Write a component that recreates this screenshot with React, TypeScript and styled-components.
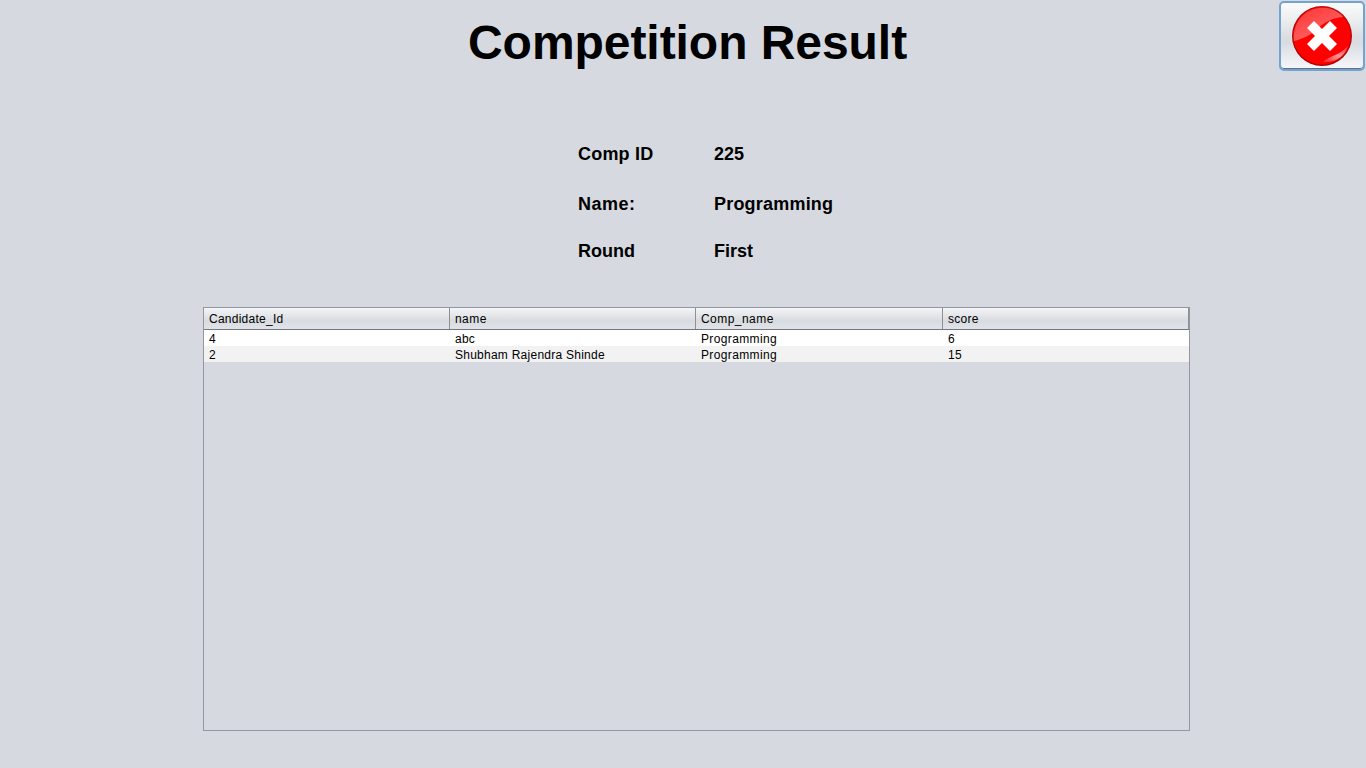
import React from "react";
import styled, { createGlobalStyle } from "styled-components";

const GlobalStyle = createGlobalStyle`
  body { margin: 0; background: #d6d9df; }
  * { box-sizing: border-box; }
`;

const Page = styled.main`
  display: flex;
  flex-direction: column;
  width: 1366px;
  height: 768px;
  overflow: hidden;
  background: #d6d9df;
  color: #000;
  font-family: "Liberation Sans", Arial, sans-serif;
`;

const Header = styled.header`
  display: grid;
  grid-template-columns: 1fr auto;
  height: 144px;
  align-items: start;
`;

const Title = styled.h1`
  margin: 15px 0 0 468px;
  font-size: 48px;
  line-height: 56px;
  letter-spacing: -0.05px;
  font-weight: bold;
  white-space: nowrap;
`;

const CloseButton = styled.button`
  display: flex;
  align-items: center;
  justify-content: center;
  width: 86px;
  height: 70px;
  margin: 1px 1px 0 0;
  padding: 0;
  border: 2px solid #73a4d1;
  border-radius: 5px;
  background: linear-gradient(#fbfbfc 0%, #eceef0 25%, #dcdee2 50%, #d8dbe0 60%, #f6f8fb 100%);
  box-shadow: inset 0 -1px 0 #5c6f86;
`;

const Details = styled.dl`
  display: grid;
  grid-template-columns: 136px 200px;
  grid-template-rows: 50px 47px 66px;
  margin: 0 0 0 578px;
  font-size: 18px;
  line-height: 20px;
  font-weight: bold;
`;

const Term = styled.dt<{ $tracking?: number }>`
  letter-spacing: ${(p) => p.$tracking ?? 0}px;
`;

const Value = styled.dd<{ $tracking?: number }>`
  margin: 0;
  letter-spacing: ${(p) => p.$tracking ?? 0}px;
`;

const TablePane = styled.section`
  width: 987px;
  height: 424px;
  margin-left: 203px;
  border: 1px solid #9297a1;
`;

const HeaderRow = styled.div`
  display: grid;
  grid-template-columns: 246px 246px 247px 246px;
  height: 22px;
  border-bottom: 1px solid #73767e;
  background: linear-gradient(#f4f5f7 0%, #e2e4e8 40%, #d8dbdf 60%, #e0e4ea 100%);
`;

const HeaderCell = styled.div<{ $tracking: number }>`
  height: 21px;
  padding-left: 5px;
  border-right: 1px solid #8d9096;
  font-size: 12px;
  line-height: 23px;
  letter-spacing: ${(p) => p.$tracking}px;
`;

const Row = styled.div<{ $alternate: boolean }>`
  display: grid;
  grid-template-columns: 246px 246px 247px 246px;
  height: 16px;
  background: ${(p) => (p.$alternate ? "#f2f2f2" : "#fff")};
`;

const Cell = styled.div<{ $tracking: number }>`
  padding-left: 5px;
  font-size: 12px;
  line-height: 19px;
  letter-spacing: ${(p) => p.$tracking}px;
  white-space: nowrap;
`;

const columns = [
  { label: "Candidate_Id", tracking: 0.25 },
  { label: "name", tracking: 0.45 },
  { label: "Comp_name", tracking: 0.45 },
  { label: "score", tracking: 0.3 },
];

const rows = [
  ["4", "abc", "Programming", "6"],
  ["2", "Shubham Rajendra Shinde", "Programming", "15"],
];

const cellTracking = [0, 0.25, 0.36, 0.3];

function CloseIcon() {
  return (
    <svg width="62" height="62" viewBox="0 0 62 62" aria-hidden="true">
      <defs>
        <linearGradient id="rim" x1="0" y1="0" x2="0" y2="1">
          <stop offset="0" stopColor="#b80f12" />
          <stop offset="1" stopColor="#a80000" />
        </linearGradient>
        <linearGradient id="gloss" x1="0" y1="0" x2="0.7" y2="1">
          <stop offset="0" stopColor="#fff" stopOpacity="0.2" />
          <stop offset="1" stopColor="#fff" stopOpacity="0.42" />
        </linearGradient>
        <linearGradient id="shine" x1="0" y1="1" x2="1" y2="0">
          <stop offset="0" stopColor="#fff" stopOpacity="0.1" />
          <stop offset="0.5" stopColor="#fff" stopOpacity="0.6" />
          <stop offset="1" stopColor="#fff" stopOpacity="0.15" />
        </linearGradient>
      </defs>
      <circle cx="31" cy="31" r="30" fill="url(#rim)" />
      <circle cx="31" cy="31" r="28.8" fill="#fe0000" />
      <path d="M3 36C1 18 14 2.8 31 2.8C40 2.8 47 6 52 12C41 13 34 17 27 23C20 30 12 34 3 36Z" fill="url(#gloss)" />
      <path d="M32 57C37 51 48 51 57 41C54 51 45 58 32 57Z" fill="url(#shine)" />
      <path
        d="M23 16L31 24L39 16L46 23L38 31L46 39L39 46L31 38L23 46L16 39L24 31L16 23Z"
        fill="#fff"
      />
    </svg>
  );
}

export default function App() {
  return (
    <Page>
      <GlobalStyle />
      <Header>
        <Title>Competition Result</Title>
        <CloseButton aria-label="Close">
          <CloseIcon />
        </CloseButton>
      </Header>
      <Details>
        <Term $tracking={0.2}>Comp ID</Term>
        <Value>225</Value>
        <Term $tracking={0.5}>Name:</Term>
        <Value $tracking={0.2}>Programming</Value>
        <Term>Round</Term>
        <Value>First</Value>
      </Details>
      <TablePane>
        <HeaderRow>
          {columns.map((column) => (
            <HeaderCell key={column.label} $tracking={column.tracking}>
              {column.label}
            </HeaderCell>
          ))}
        </HeaderRow>
        {rows.map((row, index) => (
          <Row key={row[0]} $alternate={index % 2 === 1}>
            {row.map((text, column) => (
              <Cell key={column} $tracking={cellTracking[column]}>
                {text}
              </Cell>
            ))}
          </Row>
        ))}
      </TablePane>
    </Page>
  );
}
